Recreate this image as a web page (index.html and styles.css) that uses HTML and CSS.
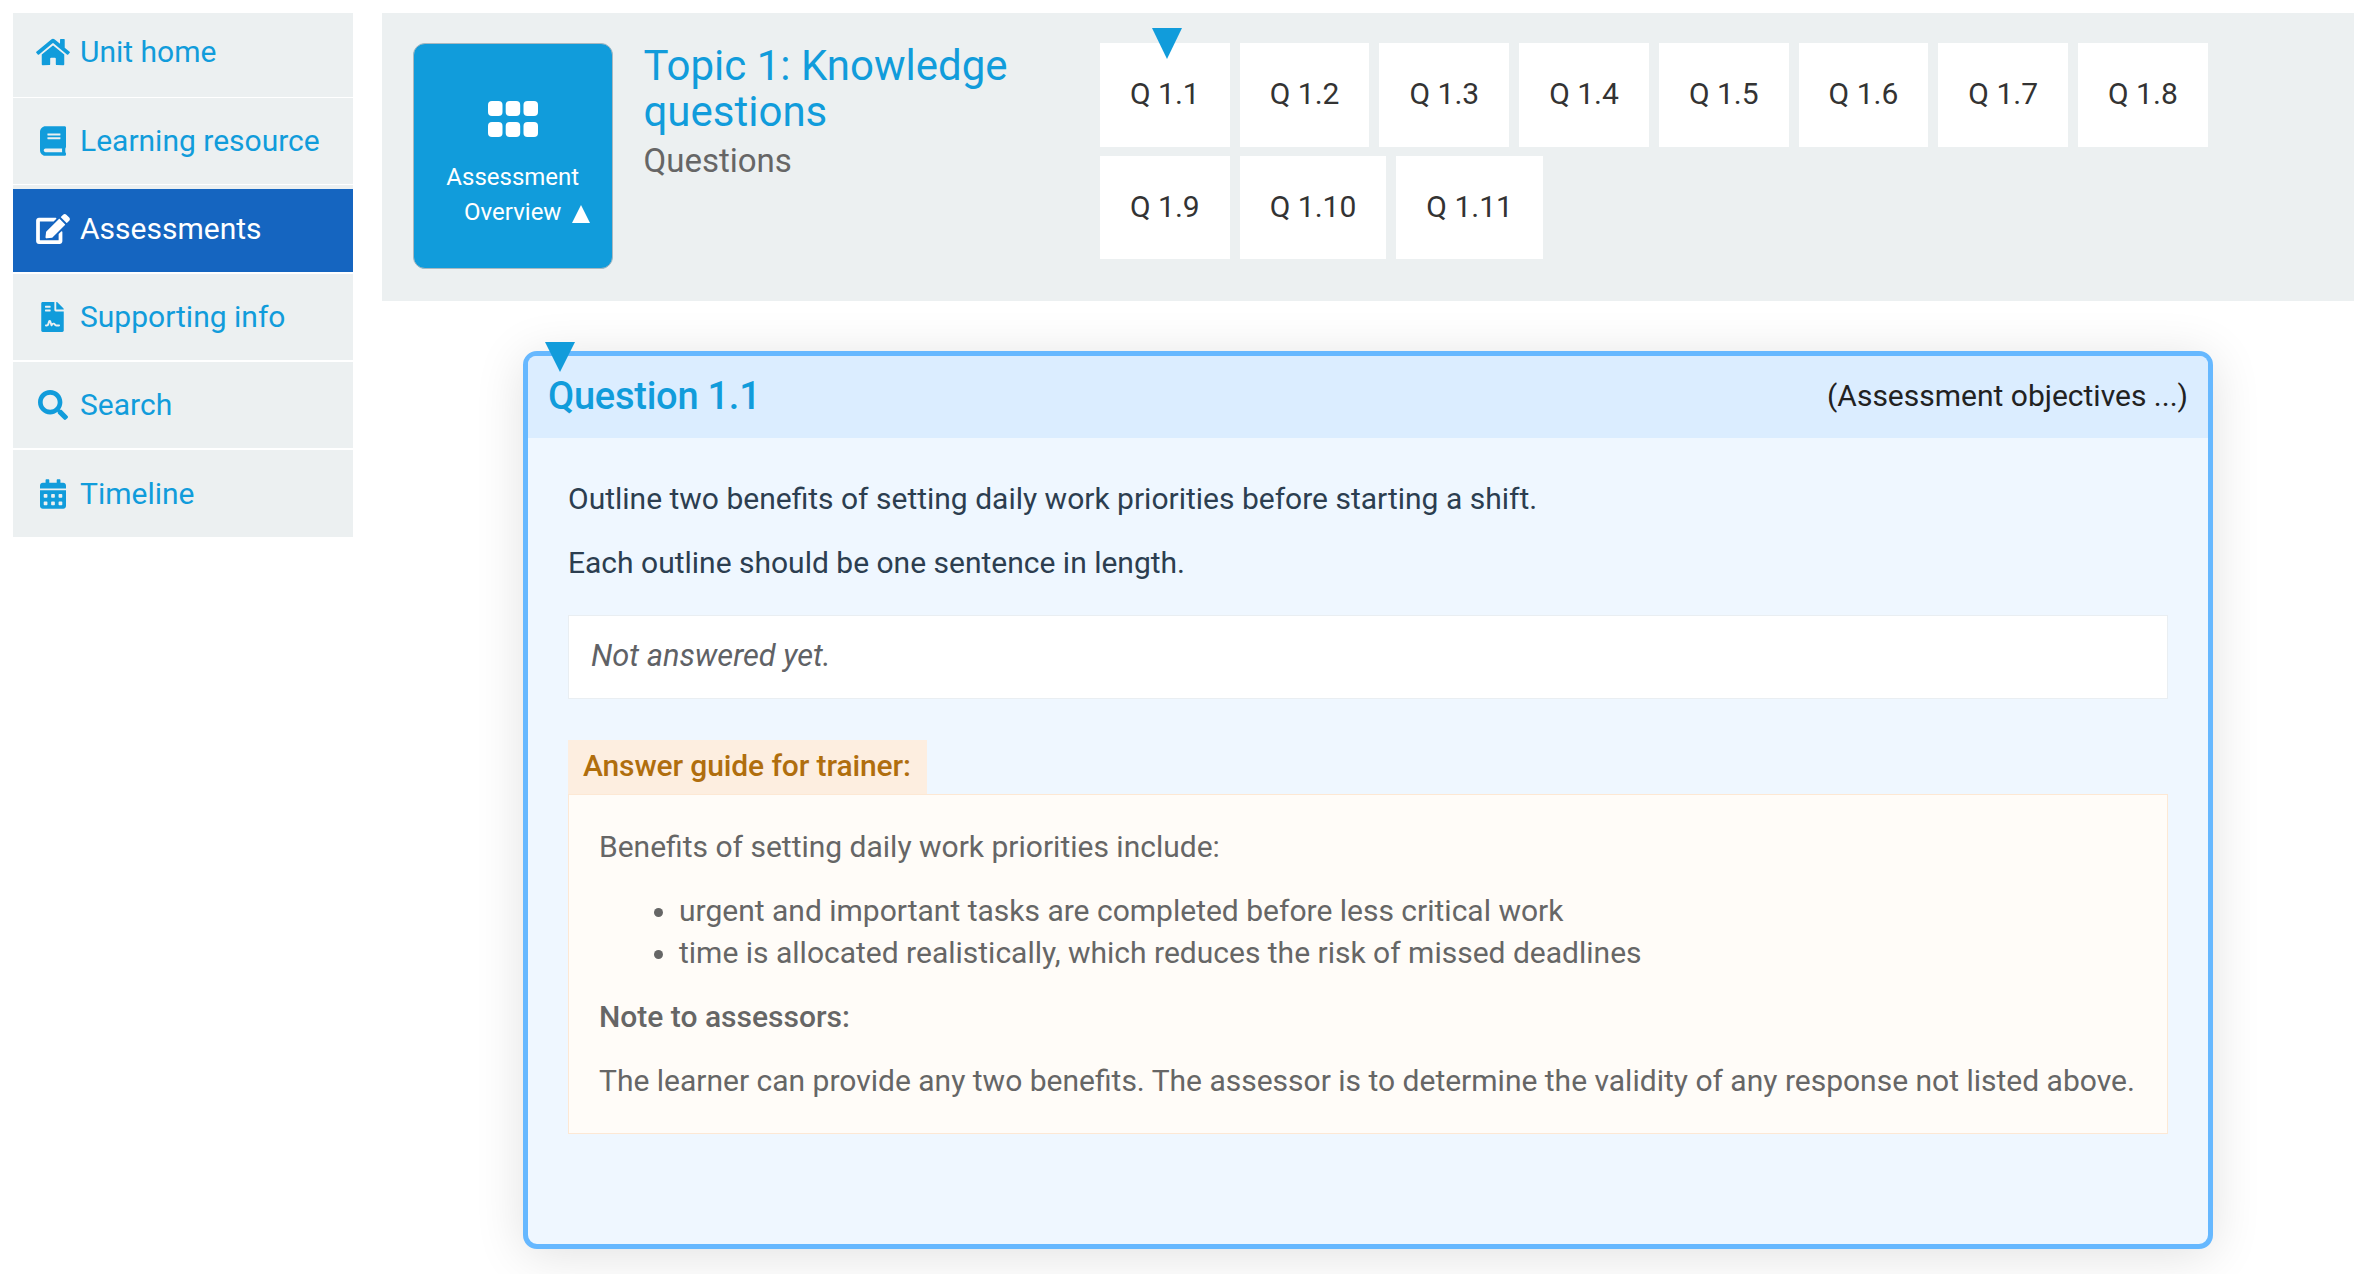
FILE: index.html
```html
<!DOCTYPE html>
<html lang="en">

<head>
    <meta charset="UTF-8">
    <meta name="viewport" content="width=device-width, initial-scale=1.0">
    <title>Assessments</title>
    <link rel="stylesheet" href="styles.css">
</head>

<body>
    <div class="page">
        <!-- Left menu -->
        <nav class="nav">
            <a class="nav-item first">
                <span class="nav-icon"><svg viewBox="0 0 576 512" width="34" height="30"><path d="M280.37 148.26L96 300.11V464a16 16 0 0 0 16 16l112.06-.29a16 16 0 0 0 15.92-16V368a16 16 0 0 1 16-16h64a16 16 0 0 1 16 16v95.64a16 16 0 0 0 16 16.05L464 480a16 16 0 0 0 16-16V300L295.67 148.26a12.19 12.19 0 0 0-15.3 0zM571.6 251.47L488 182.56V44.05a12 12 0 0 0-12-12h-56a12 12 0 0 0-12 12v72.61L318.47 43a48 48 0 0 0-61 0L4.34 251.47a12 12 0 0 0-1.6 16.9l25.5 31A12 12 0 0 0 45.15 301l235.22-193.74a12.19 12.19 0 0 1 15.3 0L530.9 301a12 12 0 0 0 16.9-1.6l25.5-31a12 12 0 0 0-1.7-16.93z"/></svg></span>
                Unit home
            </a>
            <a class="nav-item second">
                <span class="nav-icon"><svg viewBox="0 0 448 512" width="26" height="30"><path d="M448 360V24c0-13.3-10.7-24-24-24H96C43 0 0 43 0 96v320c0 53 43 96 96 96h328c13.3 0 24-10.7 24-24v-16c0-7.5-3.5-14.3-8.9-18.7-4.2-15.4-4.2-59.3 0-74.7 5.4-4.3 8.9-11.1 8.9-18.6zM128 134c0-3.3 2.7-6 6-6h212c3.3 0 6 2.7 6 6v20c0 3.3-2.7 6-6 6H134c-3.3 0-6-2.7-6-6v-20zm0 64c0-3.3 2.7-6 6-6h212c3.3 0 6 2.7 6 6v20c0 3.3-2.7 6-6 6H134c-3.3 0-6-2.7-6-6v-20zm253.4 250H96c-17.7 0-32-14.3-32-32 0-17.6 14.4-32 32-32h285.4c-1.9 17.1-1.9 46.9 0 64z"/></svg></span>
                Learning resource
            </a>
            <a class="nav-item active">
                <span class="nav-icon"><svg viewBox="0 0 576 512" width="34" height="30"><path d="M402.6 83.2l90.2 90.2c3.8 3.8 3.8 10 0 13.8L274.4 405.6l-92.8 10.3c-12.4 1.4-22.9-9.1-21.5-21.5l10.3-92.8L388.8 83.2c3.8-3.8 10-3.8 13.8 0zm162-22.9l-48.8-48.8c-15.2-15.2-39.9-15.2-55.2 0l-35.4 35.4c-3.8 3.8-3.8 10 0 13.8l90.2 90.2c3.8 3.8 10 3.8 13.8 0l35.4-35.4c15.2-15.3 15.2-40 0-55.2zM384 346.2V448H64V128h229.8c3.2 0 6.2-1.3 8.5-3.5l40-40c7.6-7.6 2.2-20.5-8.5-20.5H48C21.5 64 0 85.5 0 112v352c0 26.5 21.5 48 48 48h352c26.5 0 48-21.5 48-48V306.2c0-10.7-12.9-16-20.5-8.5l-40 40c-2.2 2.3-3.5 5.3-3.5 8.5z"/></svg></span>
                Assessments
            </a>
            <a class="nav-item">
                <span class="nav-icon"><svg viewBox="0 0 384 512" width="23" height="30"><path d="M224 136V0H24C10.7 0 0 10.7 0 24v464c0 13.3 10.7 24 24 24h336c13.3 0 24-10.7 24-24V160H248c-13.2 0-24-10.8-24-24zM64 72c0-4.42 3.58-8 8-8h80c4.42 0 8 3.58 8 8v16c0 4.42-3.58 8-8 8H72c-4.42 0-8-3.58-8-8V72zm0 64c0-4.42 3.58-8 8-8h80c4.42 0 8 3.58 8 8v16c0 4.42-3.58 8-8 8H72c-4.42 0-8-3.58-8-8v-16zm192.81 248H304c8.84 0 16 7.16 16 16s-7.16 16-16 16h-47.19c-16.45 0-31.27-9.14-38.64-23.86-2.95-5.92-8.09-6.52-10.17-6.52s-7.22.59-10.02 6.19l-7.67 15.34a15.986 15.986 0 0 1-14.31 8.84c-.38 0-.75-.02-1.14-.05-6.45-.45-12-4.75-14.03-10.89L144 354.59l-10.61 31.88c-5.89 17.66-22.38 29.53-41 29.53H80c-8.84 0-16-7.16-16-16s7.16-16 16-16h12.39c4.83 0 9.11-3.08 10.64-7.66l18.19-54.64c3.3-9.81 12.44-16.41 22.78-16.41s19.48 6.59 22.77 16.41l13.88 41.64c19.77-16.19 54.05-9.7 66 14.16 2.02 4.06 5.96 6.5 10.16 6.5zM377 105L279.1 7c-4.5-4.5-10.6-7-17-7H256v128h128v-6.1c0-6.3-2.5-12.4-7-16.9z"/></svg></span>
                Supporting info
            </a>
            <a class="nav-item">
                <span class="nav-icon"><svg viewBox="0 0 512 512" width="30" height="30"><path d="M505 442.7L405.3 343c-4.5-4.5-10.6-7-17-7H372c27.6-35.3 44-79.7 44-128C416 93.1 322.9 0 208 0S0 93.1 0 208s93.1 208 208 208c48.3 0 92.7-16.4 128-44v16.3c0 6.4 2.5 12.5 7 17l99.7 99.7c9.4 9.4 24.6 9.4 33.9 0l28.3-28.3c9.4-9.4 9.4-24.6.1-34zM208 336c-70.7 0-128-57.2-128-128 0-70.7 57.2-128 128-128 70.7 0 128 57.2 128 128 0 70.7-57.2 128-128 128z"/></svg></span>
                Search
            </a>
            <a class="nav-item last">
                <span class="nav-icon"><svg viewBox="0 0 448 512" width="26" height="30"><path d="M0 464c0 26.5 21.5 48 48 48h352c26.5 0 48-21.5 48-48V192H0v272zm320-196c0-6.6 5.4-12 12-12h40c6.6 0 12 5.4 12 12v40c0 6.6-5.4 12-12 12h-40c-6.6 0-12-5.4-12-12v-40zm0 128c0-6.6 5.4-12 12-12h40c6.6 0 12 5.4 12 12v40c0 6.6-5.4 12-12 12h-40c-6.6 0-12-5.4-12-12v-40zM192 268c0-6.6 5.4-12 12-12h40c6.6 0 12 5.4 12 12v40c0 6.6-5.4 12-12 12h-40c-6.6 0-12-5.4-12-12v-40zm0 128c0-6.6 5.4-12 12-12h40c6.6 0 12 5.4 12 12v40c0 6.6-5.4 12-12 12h-40c-6.6 0-12-5.4-12-12v-40zM64 268c0-6.6 5.4-12 12-12h40c6.6 0 12 5.4 12 12v40c0 6.6-5.4 12-12 12H76c-6.6 0-12-5.4-12-12v-40zm0 128c0-6.6 5.4-12 12-12h40c6.6 0 12 5.4 12 12v40c0 6.6-5.4 12-12 12H76c-6.6 0-12-5.4-12-12v-40zM400 64h-48V16c0-8.8-7.2-16-16-16h-32c-8.8 0-16 7.2-16 16v48H160V16c0-8.8-7.2-16-16-16h-32c-8.8 0-16 7.2-16 16v48H48C21.5 64 0 85.5 0 112v48h448v-48c0-26.5-21.5-48-48-48z"/></svg></span>
                Timeline
            </a>
        </nav>

        <main class="main">
            <!-- Topic bar with the question links -->
            <section class="topic-bar">
                <a class="overview-btn">
                    <svg class="overview-icon" viewBox="0 0 50 36" width="50" height="36">
                        <rect x="0" y="0" width="14.5" height="15" rx="4"/>
                        <rect x="17.7" y="0" width="14.5" height="15" rx="4"/>
                        <rect x="35.5" y="0" width="14.5" height="15" rx="4"/>
                        <rect x="0" y="21" width="14.5" height="15" rx="4"/>
                        <rect x="17.7" y="21" width="14.5" height="15" rx="4"/>
                        <rect x="35.5" y="21" width="14.5" height="15" rx="4"/>
                    </svg>
                    <span class="overview-text">Assessment</span>
                    <span class="overview-text"><span class="overview-arrow">Overview</span></span>
                </a>
                <div class="topic-title">
                    <h1>Topic 1: Knowledge questions</h1>
                    <h2>Questions</h2>
                </div>
                <div class="q-list">
                    <span class="q-marker"></span>
                    <a class="q-btn">Q 1.1</a>
                    <a class="q-btn">Q 1.2</a>
                    <a class="q-btn">Q 1.3</a>
                    <a class="q-btn">Q 1.4</a>
                    <a class="q-btn">Q 1.5</a>
                    <a class="q-btn">Q 1.6</a>
                    <a class="q-btn">Q 1.7</a>
                    <a class="q-btn">Q 1.8</a>
                    <a class="q-btn">Q 1.9</a>
                    <a class="q-btn">Q 1.10</a>
                    <a class="q-btn">Q 1.11</a>
                </div>
            </section>

            <!-- Question card -->
            <section class="card">
                <span class="card-marker"></span>
                <header class="card-head">
                    <h3>Question 1.1</h3>
                    <span class="objectives">(Assessment objectives ...)</span>
                </header>
                <div class="card-body">
                    <p>Outline two benefits of setting daily work priorities before starting a shift.</p>
                    <p>Each outline should be one sentence in length.</p>
                    <div class="answer">Not answered yet.</div>
                    <div class="guide-label">Answer guide for trainer:</div>
                    <div class="guide">
                        <p>Benefits of setting daily work priorities include:</p>
                        <ul>
                            <li>urgent and important tasks are completed before less critical work</li>
                            <li>time is allocated realistically, which reduces the risk of missed deadlines</li>
                        </ul>
                        <p><strong>Note to assessors:</strong></p>
                        <p>The learner can provide any two benefits. The assessor is to determine the validity of any response not listed above.</p>
                    </div>
                </div>
            </section>
        </main>
    </div>
</body>

</html>
```

FILE: styles.css
```css
html,
body {
    margin: 0;
    height: 1274px;
    overflow: hidden;
    background-color: #ffffff;
}

body {
    font-family: Roboto, "Liberation Sans", sans-serif;
    font-size: 30px;
    line-height: 42px;
    color: #2c3e50;
}

.page {
    display: flex;
    align-items: flex-start;
    padding: 13px 11.5px 0 12.5px;
    gap: 28.5px;
}

/* Left menu */
.nav {
    display: flex;
    flex-direction: column;
    gap: 1.5px;
    width: 340.5px;
    flex: none;
}

.nav-item {
    display: flex;
    align-items: center;
    box-sizing: border-box;
    height: 86.5px;
    padding-left: 21.5px;
    padding-top: 1px;
    gap: 8.5px;
    background-color: #ecf0f1;
    color: #119cdb;
}

.nav-item.first {
    height: 83.5px;
    padding-top: 0;
    padding-bottom: 6px;
}

.nav-item.second {
    height: 85.5px;
    padding-top: 0;
}

.nav-item.last {
    height: 87.5px;
    padding-top: 2px;
}

.nav-item.active {
    height: 87px;
    padding-top: 0;
    padding-bottom: 3px;
    border-top: 4.5px solid #ecf0f1;
    background-color: #1565c0;
    color: #ffffff;
}

.nav-icon {
    display: flex;
    justify-content: center;
    width: 37.5px;
    flex: none;
}

.nav-icon svg {
    fill: currentColor;
}

/* Topic bar */
.main {
    flex: 1;
    min-width: 0;
}

.topic-bar {
    display: flex;
    align-items: flex-start;
    box-sizing: border-box;
    height: 288px;
    padding: 30px 0 0 31.5px;
    background-color: #ecf0f1;
}

.overview-btn {
    display: flex;
    flex-direction: column;
    align-items: center;
    box-sizing: border-box;
    width: 199.5px;
    height: 226px;
    padding-top: 57px;
    border: 1px solid #a9b8c0;
    border-radius: 12px;
    background-color: #119cdb;
    color: #ffffff;
    font-size: 24px;
    line-height: 35px;
    flex: none;
}

.overview-icon {
    fill: #ffffff;
    margin-bottom: 23px;
}

.overview-arrow {
    position: relative;
}

/* Small up arrow after "Overview", does not count for centring */
.overview-arrow::after {
    content: "";
    position: absolute;
    left: 107.5px;
    top: 7px;
    border-left: 9px solid transparent;
    border-right: 9px solid transparent;
    border-bottom: 18px solid #ffffff;
}

.topic-title {
    box-sizing: border-box;
    width: 487.5px;
    padding-left: 31px;
    flex: none;
}

.topic-title h1 {
    margin: 0;
    font-size: 42px;
    font-weight: 400;
    line-height: 46px;
    color: #119cdb;
}

.topic-title h2 {
    margin: 5px 0 0;
    font-size: 33px;
    font-weight: 400;
    line-height: 42px;
    color: #666666;
}

.q-list {
    position: relative;
    display: flex;
    flex-wrap: wrap;
    align-content: flex-start;
    gap: 9px 10px;
    width: 1120px;
}

.q-btn {
    box-sizing: border-box;
    height: 103.5px;
    padding: 0 30px;
    background-color: #ffffff;
    line-height: 101.5px;
    color: #333333;
}

.q-marker {
    position: absolute;
    left: 52px;
    top: -15px;
    border-left: 15px solid transparent;
    border-right: 15px solid transparent;
    border-top: 31px solid #119cdb;
}

/* Question card */
.card {
    position: relative;
    box-sizing: border-box;
    width: 1690px;
    height: 898px;
    margin: 50px 0 0 141.5px;
    border: 5px solid #66b8ff;
    border-radius: 14px;
    background-color: #eff7ff;
    box-shadow: 0 6px 50px rgba(0, 0, 0, 0.12);
}

.card-marker {
    position: absolute;
    left: 17px;
    top: -14px;
    border-left: 15px solid transparent;
    border-right: 15px solid transparent;
    border-top: 30px solid #119cdb;
}

.card-head {
    display: flex;
    justify-content: space-between;
    align-items: center;
    height: 82px;
    padding: 0 20px;
    background-color: #dbedff;
    border-radius: 8px 8px 0 0;
}

.card-head h3 {
    margin: -2px 0 0;
    font-size: 38px;
    font-weight: 500;
    letter-spacing: -0.25px;
    color: #119cdb;
}

.objectives {
    margin-top: -2px;
    color: #222222;
}

.card-body {
    padding: 40px 40px 0;
}

.card-body p {
    margin: 0 0 22px;
}

.answer {
    box-sizing: border-box;
    height: 84px;
    margin: 31px 0 41px;
    padding: 19px 22px 0;
    border: 1px solid #e9eef2;
    background-color: #ffffff;
    font-size: 30.8px;
    font-style: italic;
    color: #606266;
}

.guide-label {
    box-sizing: border-box;
    width: 358.5px;
    height: 54px;
    padding: 5px 15px 0;
    background-color: #fdeee0;
    font-weight: 500;
    letter-spacing: -0.12px;
    white-space: nowrap;
    color: #b06e0e;
}

.guide {
    box-sizing: border-box;
    height: 340px;
    padding: 31px 30px 0;
    border: 1px solid #fde8d4;
    background-color: #fffcf8;
    color: #666666;
}

.guide ul {
    margin: 0 0 22px;
    padding-left: 80px;
}

.guide strong {
    font-weight: 500;
}
```
